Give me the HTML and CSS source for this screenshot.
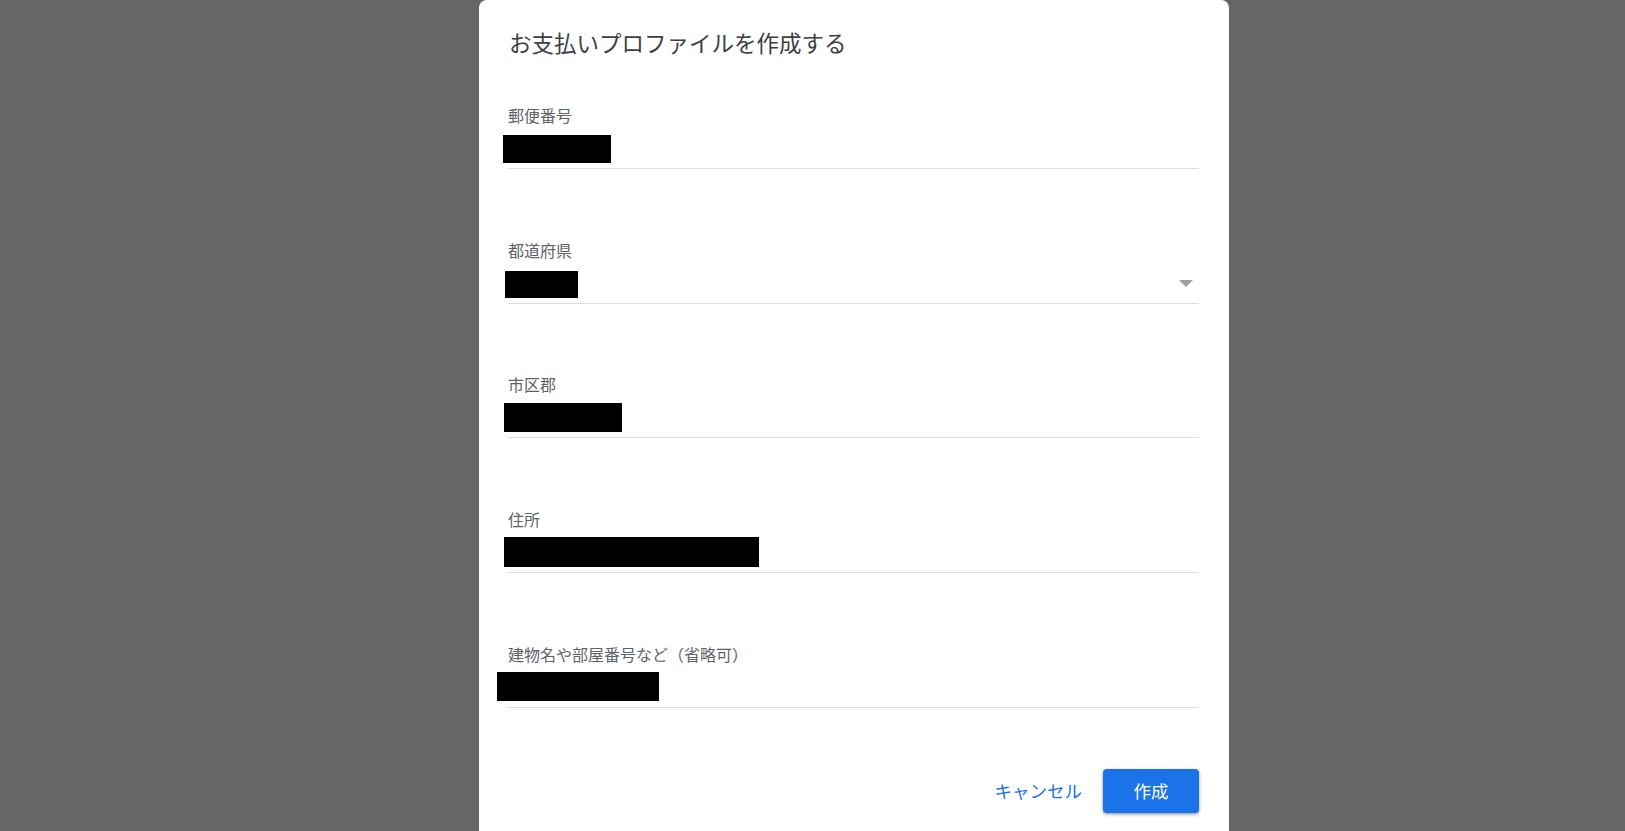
FILE: index.html
```html
<!DOCTYPE html>
<html lang="ja">
<head>
<meta charset="utf-8">
<title>お支払いプロファイルを作成する</title>
<link rel="stylesheet" href="styles.css">
</head>
<body>
<div class="scrim">
  <div class="dialog">
    <h1 class="title">お支払いプロファイルを作成する</h1>
    <div class="fields">
      <div class="field">
        <div class="label">郵便番号</div>
        <div class="input"><span class="redact" style="left:-5px;top:6px;width:108px;height:28px"></span></div>
      </div>
      <div class="field">
        <div class="label">都道府県</div>
        <div class="input select"><span class="redact" style="left:-3px;top:7px;width:73px;height:27px"></span><span class="caret"></span></div>
      </div>
      <div class="field">
        <div class="label">市区郡</div>
        <div class="input"><span class="redact" style="left:-4px;top:5px;width:118px;height:29px"></span></div>
      </div>
      <div class="field">
        <div class="label">住所</div>
        <div class="input"><span class="redact" style="left:-4px;top:4px;width:255px;height:30px"></span></div>
      </div>
      <div class="field">
        <div class="label">建物名や部屋番号など（省略可）</div>
        <div class="input"><span class="redact" style="left:-11px;top:4px;width:162px;height:29px"></span></div>
      </div>
    </div>
    <div class="actions">
      <button class="btn-text" type="button">キャンセル</button>
      <button class="btn-primary" type="button">作成</button>
    </div>
  </div>
</div>
</body>
</html>
```
FILE: styles.css
```css
html, body {
  margin: 0;
  padding: 0;
  height: 100%;
  overflow: hidden;
}
body {
  background: #666666;
  font-family: "Noto Sans CJK JP", "Noto Sans", sans-serif;
}
.scrim {
  display: flex;
  padding-left: 479px;
  height: 100%;
}
.dialog {
  width: 750px;
  box-sizing: border-box;
  background: #ffffff;
  border-radius: 8px 8px 0 0;
  padding: 28px 30px 40px 29px;
  min-height: 100%;
  display: flex;
  flex-direction: column;
}
.title {
  margin: 0 0 49px 1px;
  font-size: 22.5px;
  line-height: 28px;
  font-weight: 400;
  color: #3c4043;
}
.fields {
  display: flex;
  flex-direction: column;
  gap: 70.7px;
}
.field {
  display: flex;
  flex-direction: column;
}
.label {
  font-size: 16px;
  line-height: 20px;
  color: #5f6368;
  margin-bottom: 4px;
}
.input {
  position: relative;
  height: 40px;
  box-sizing: border-box;
  border-bottom: 1px solid #dadce0;
}
.redact {
  position: absolute;
  background: #000000;
}
.select {
  display: flex;
  align-items: center;
  justify-content: flex-end;
}
.caret {
  width: 0;
  height: 0;
  border-left: 7px solid transparent;
  border-right: 7px solid transparent;
  border-top: 7px solid #9e9e9e;
  margin-right: 6px;
  margin-top: 0;
}
.actions {
  margin-top: 61px;
  display: flex;
  justify-content: flex-end;
  align-items: center;
}
.btn-text {
  background: none;
  border: none;
  font-family: inherit;
  font-size: 17.5px;
  color: #1a73e8;
  padding: 0 12px;
  height: 44px;
  margin-right: 9px;
  cursor: pointer;
}
.btn-primary {
  width: 96px;
  height: 44px;
  background: #1a73e8;
  color: #ffffff;
  border: none;
  border-radius: 4px;
  font-family: inherit;
  font-size: 17.5px;
  box-shadow: 0 1px 3px rgba(0,0,0,0.35), 0 2px 4px rgba(0,0,0,0.12);
  cursor: pointer;
}
```
